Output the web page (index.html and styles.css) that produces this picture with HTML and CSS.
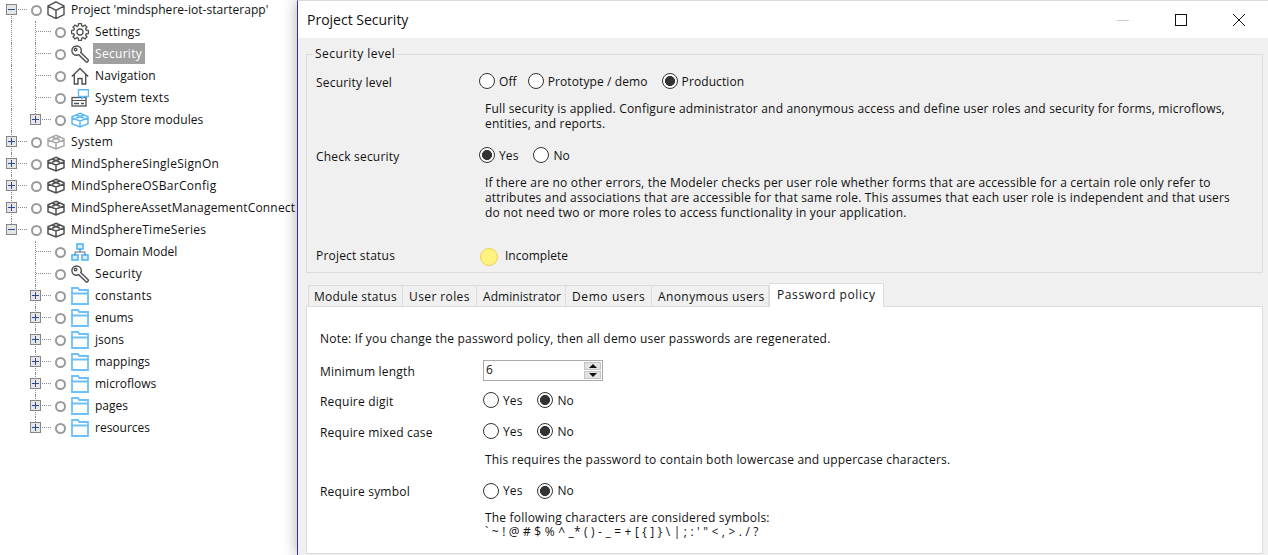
FILE: index.html
```html
<!DOCTYPE html>
<html lang="en">
<head>
<meta charset="utf-8">
<title>Project Security</title>
<link rel="stylesheet" href="styles.css">
</head>
<body>
<svg class="defs" aria-hidden="true">
  <symbol id="i-cube" viewBox="0 0 18 18"><path d="M9 .8 17 5v8.600l-8 4-8-4V5zM1 5l8 4.400L17 5M9 9.400v8.200" fill="none" stroke="#505050" stroke-width="1.400"/></symbol>
  <symbol id="i-gear" viewBox="0 0 18 18"><g transform="translate(9 9)" fill="none" stroke="#505050" stroke-width="1.300"><path d="M6.150-1.760 8.500-1.350V1.350L6.150 1.760 5.600 3.100 6.960 5.050 5.050 6.960 3.100 5.600 1.760 6.150 1.350 8.500H-1.350L-1.760 6.150-3.100 5.600-5.050 6.960-6.960 5.050-5.600 3.100-6.150 1.760-8.500 1.350V-1.350L-6.150-1.760-5.600-3.100-6.960-5.050-5.050-6.960-3.100-5.600-1.760-6.150-1.350-8.500H1.350L1.760-6.150 3.100-5.600 5.050-6.960 6.960-5.050 5.600-3.100z"/><circle r="3"/></g></symbol>
  <symbol id="i-key" viewBox="0 0 18 18"><g fill="none" stroke="#505050" stroke-width="1.400"><path d="M5.600 1C8.300 1 10.300 3 10.300 5.600c0 .8-.2 1.400-.5 2l7.600 7.300c.3.3.3.6 0 .9l-1.200 1.200c-.3.3-.6.3-.9 0L7.700 9.700c-.6.3-1.300.5-2.100.5C3 10.200.9 8.200.9 5.600.9 3 3 1 5.600 1z"/><circle cx="4.600" cy="4.600" r="1.300"/></g></symbol>
  <symbol id="i-home" viewBox="0 0 18 18"><path d="M.8 9.500 9 1.500l8.200 8M3.300 7.500V17H7v-5.500h4V17h3.700V7.500" fill="none" stroke="#505050" stroke-width="1.400"/></symbol>
  <symbol id="i-text" viewBox="0 0 18 18"><rect x="1" y="8.500" width="14" height="8.500" fill="none" stroke="#505050" stroke-width="1.300"/><path d="M1 11.500h14" stroke="#505050"/><path d="M3 14.500h5M10 14.500h3" stroke="#505050" stroke-width="1.500"/><path d="M7.500.7h10v6.800h-4.500l-2 2v-2H7.500z" fill="#fff" stroke="#5cb8f8" stroke-width="1.400"/></symbol>
  <symbol id="i-box" viewBox="0 0 18 16"><path d="M9 1.200 17 4.700v7L9 15l-8-3.300v-7zM1 6 9 9l8-3M9 9v6M5 3l8 3.300M13 3 5 6.300" fill="none" stroke="currentColor" stroke-width="1.500"/></symbol>
  <symbol id="i-domain" viewBox="0 0 18 18"><g fill="#d8eeff" stroke="#5cb8f8" stroke-width="1.700"><rect x="6" y="1" width="6" height="5"/><rect x="1" y="12" width="6" height="5"/><rect x="11" y="12" width="6" height="5"/></g><path d="M9 6v3M4 12V9h10v3" fill="none" stroke="#4a6a8a"/></symbol>
  <symbol id="i-folder" viewBox="0 0 18 18"><path d="M1 1h6l1.200 2H17v14H1zM1 6.500h16" fill="none" stroke="#6cc0fb" stroke-width="1.800"/></symbol>
</svg>

<div class="app">
  <nav class="tree">
    <div class="node root"><span class="guide down arm"><span class="exp minus"></span></span><span class="dot"></span><svg class="ico"><use href="#i-cube"/></svg><span class="lbl">Project 'mindsphere-iot-starterapp'</span></div>
    <div class="node"><span class="guide"></span><span class="guide arm"></span><span class="dot"></span><svg class="ico"><use href="#i-gear"/></svg><span class="lbl">Settings</span></div>
    <div class="node"><span class="guide"></span><span class="guide arm"></span><span class="dot"></span><svg class="ico"><use href="#i-key"/></svg><span class="lbl selected">Security</span></div>
    <div class="node"><span class="guide"></span><span class="guide arm"></span><span class="dot"></span><svg class="ico"><use href="#i-home"/></svg><span class="lbl">Navigation</span></div>
    <div class="node"><span class="guide"></span><span class="guide arm"></span><span class="dot"></span><svg class="ico"><use href="#i-text"/></svg><span class="lbl wider">System texts</span></div>
    <div class="node"><span class="guide"></span><span class="guide up arm"><span class="exp plus"></span></span><span class="dot"></span><svg class="ico box-blue"><use href="#i-box"/></svg><span class="lbl">App Store modules</span></div>
    <div class="node"><span class="guide arm"><span class="exp plus"></span></span><span class="dot"></span><svg class="ico box-light"><use href="#i-box"/></svg><span class="lbl wider">System</span></div>
    <div class="node"><span class="guide arm"><span class="exp plus"></span></span><span class="dot"></span><svg class="ico box-dark"><use href="#i-box"/></svg><span class="lbl wider">MindSphereSingleSignOn</span></div>
    <div class="node"><span class="guide arm"><span class="exp plus"></span></span><span class="dot"></span><svg class="ico box-dark"><use href="#i-box"/></svg><span class="lbl wider">MindSphereOSBarConfig</span></div>
    <div class="node"><span class="guide arm"><span class="exp plus"></span></span><span class="dot"></span><svg class="ico box-dark"><use href="#i-box"/></svg><span class="lbl fit">MindSphereAssetManagementConnect</span></div>
    <div class="node"><span class="guide up arm"><span class="exp minus"></span></span><span class="dot"></span><svg class="ico box-dark"><use href="#i-box"/></svg><span class="lbl wider">MindSphereTimeSeries</span></div>
    <div class="node"><span class="guide off"></span><span class="guide arm"></span><span class="dot"></span><svg class="ico"><use href="#i-domain"/></svg><span class="lbl tight">Domain Model</span></div>
    <div class="node"><span class="guide off"></span><span class="guide arm"></span><span class="dot"></span><svg class="ico"><use href="#i-key"/></svg><span class="lbl wider">Security</span></div>
    <div class="node"><span class="guide off"></span><span class="guide arm"><span class="exp plus"></span></span><span class="dot"></span><svg class="ico"><use href="#i-folder"/></svg><span class="lbl wider">constants</span></div>
    <div class="node"><span class="guide off"></span><span class="guide arm"><span class="exp plus"></span></span><span class="dot"></span><svg class="ico"><use href="#i-folder"/></svg><span class="lbl tight">enums</span></div>
    <div class="node"><span class="guide off"></span><span class="guide arm"><span class="exp plus"></span></span><span class="dot"></span><svg class="ico"><use href="#i-folder"/></svg><span class="lbl tight">jsons</span></div>
    <div class="node"><span class="guide off"></span><span class="guide arm"><span class="exp plus"></span></span><span class="dot"></span><svg class="ico"><use href="#i-folder"/></svg><span class="lbl tight">mappings</span></div>
    <div class="node"><span class="guide off"></span><span class="guide arm"><span class="exp plus"></span></span><span class="dot"></span><svg class="ico"><use href="#i-folder"/></svg><span class="lbl tight">microflows</span></div>
    <div class="node"><span class="guide off"></span><span class="guide arm"><span class="exp plus"></span></span><span class="dot"></span><svg class="ico"><use href="#i-folder"/></svg><span class="lbl tight">pages</span></div>
    <div class="node"><span class="guide off"></span><span class="guide up arm"><span class="exp plus"></span></span><span class="dot"></span><svg class="ico"><use href="#i-folder"/></svg><span class="lbl tight">resources</span></div>
  </nav>

  <main class="dialog">
    <header class="titlebar">
      <h1 class="title">Project Security</h1>
      <div class="winctl">
        <span class="wbtn"><svg width="14" height="14" viewBox="0 0 14 14"><path d="M1 7.500h12" stroke="#ccc"/></svg></span>
        <span class="wbtn"><svg width="14" height="14" viewBox="0 0 14 14"><rect x="1.500" y="1.500" width="11" height="11" fill="none" stroke="#111"/></svg></span>
        <span class="wbtn"><svg width="14" height="14" viewBox="0 0 14 14"><path d="M1 1l12 12M13 1 1 13" stroke="#111" fill="none"/></svg></span>
      </div>
    </header>
    <div class="dialog-body">
      <fieldset class="group">
        <legend class="legend">Security level</legend>
        <div class="field">
          <span class="field-label">Security level</span>
          <div class="radios">
            <span class="opt off-opt"><i class="radio"></i>Off</span>
            <span class="opt proto-opt"><i class="radio"></i>Prototype / demo</span>
            <span class="opt"><i class="radio on"></i>Production</span>
          </div>
        </div>
        <p class="hint hint-a">Full security is applied. Configure administrator and anonymous access and define user roles and security for forms, microflows,<br>entities, and reports.</p>
        <div class="field field-check">
          <span class="field-label">Check security</span>
          <div class="radios">
            <span class="opt yes-opt"><i class="radio on"></i>Yes</span>
            <span class="opt"><i class="radio"></i>No</span>
          </div>
        </div>
        <p class="hint hint-a">If there are no other errors, the Modeler checks per user role whether forms that are accessible for a certain role only refer to<br>attributes and associations that are accessible for that same role. This assumes that each user role is independent and that users<br>do not need two or more roles to access functionality in your application.</p>
        <div class="field field-status">
          <span class="field-label plain">Project status</span>
          <div class="status"><i class="lamp"></i>Incomplete</div>
        </div>
      </fieldset>

      <div class="tabs">
        <span class="tab t1">Module status</span>
        <span class="tab t2">User roles</span>
        <span class="tab t3">Administrator</span>
        <span class="tab t4">Demo users</span>
        <span class="tab t5">Anonymous users</span>
        <span class="tab active">Password policy</span>
      </div>
      <section class="panel">
        <p class="note">Note: If you change the password policy, then all demo user passwords are regenerated.</p>
        <div class="field p-min">
          <span class="field-label">Minimum length</span>
          <div class="spin"><span class="spin-val">6</span><span class="spin-btns"><b class="spin-btn"><i class="tri up-tri"></i></b><b class="spin-btn"><i class="tri down-tri"></i></b></span></div>
        </div>
        <div class="field p-digit">
          <span class="field-label">Require digit</span>
          <div class="radios"><span class="opt yes-opt"><i class="radio"></i>Yes</span><span class="opt"><i class="radio on"></i>No</span></div>
        </div>
        <div class="field p-mixed">
          <span class="field-label">Require mixed case</span>
          <div class="radios"><span class="opt yes-opt"><i class="radio"></i>Yes</span><span class="opt"><i class="radio on"></i>No</span></div>
        </div>
        <p class="hint hint-p hint-mixed">This requires the password to contain both lowercase and uppercase characters.</p>
        <div class="field p-symbol">
          <span class="field-label">Require symbol</span>
          <div class="radios"><span class="opt yes-opt"><i class="radio"></i>Yes</span><span class="opt"><i class="radio on"></i>No</span></div>
        </div>
        <p class="hint hint-p hint-symbol">The following characters are considered symbols:<br>` ~ ! @ # $ % ^ _* ( ) - _ = + [ { ] } \ | ; : ' " &lt; , &gt; . / ?</p>
      </section>
    </div>
  </main>
</div>
</body>
</html>
```

FILE: styles.css
```css
* { box-sizing: border-box; }
html, body { margin: 0; height: 100%; overflow: hidden; background: #fff; }
body { font: 12px/15px "Open Sans", "Noto Sans", sans-serif; color: #111; }
.defs { display: none; }
.app { display: flex; height: 555px; }

/* project tree */
.tree { width: 297px; flex: none; margin-top: -1px; overflow: hidden; }
.node { display: flex; align-items: center; height: 22px; white-space: nowrap; }
.guide { position: relative; flex: none; width: 24px; height: 22px; }
.guide::before { content: ""; position: absolute; left: 11px; top: 0; bottom: 0; border-left: 1px dotted #8a8a8a; }
.guide.up::before { bottom: 11px; }
.guide.down::before { top: 11px; }
.guide.off::before { display: none; }
.guide.arm::after { content: ""; position: absolute; left: 12px; top: 10px; width: 15px; border-top: 1px dotted #8a8a8a; }
.exp { position: absolute; z-index: 1; left: 6px; top: 5px; width: 11px; height: 11px; border: 1px solid #858585; background-color: #e6e6e6; background-repeat: no-repeat; }
.exp.minus { background-image: linear-gradient(#2b4a94, #2b4a94); background-position: center; background-size: 7px 1px; }
.exp.plus { background-image: linear-gradient(#2b4a94, #2b4a94), linear-gradient(#2b4a94, #2b4a94); background-position: center, center; background-size: 7px 1px, 1px 7px; }
.dot { flex: none; width: 11px; height: 11px; margin-left: 7px; border: 2px solid #9a9a9a; border-radius: 50%; background: #fff; }
.ico { flex: none; width: 18px; height: 18px; margin-left: 5px; }
.box-blue { color: #5cb8f8; }
.box-light { color: #a8a8a8; }
.box-dark { color: #505050; }
.lbl { height: 21px; margin: 0 0 2px 4px; padding: 0 2px; line-height: 21px; letter-spacing: .1px; }
.lbl.wider { letter-spacing: .3px; }
.lbl.tight { letter-spacing: 0; }
.lbl.fit { padding-right: 0; letter-spacing: .17px; }
.root .lbl { letter-spacing: .03px; }
.lbl.selected { padding-right: 3px; background: #a0a0a0; color: #fff; letter-spacing: .3px; }

/* dialog */
.dialog { flex: 1; min-width: 0; height: 555px; position: relative; display: flex; flex-direction: column; background: #f0f0f0; border-left: 1px solid #3a2f9c; border-top: 1px solid #dadada; box-shadow: 0 0 14px rgba(0, 0, 0, .32); }
.titlebar { flex: none; display: flex; justify-content: space-between; align-items: center; height: 37px; padding-left: 9px; background: #fff; }
.title { margin: 0; font-size: 14px; font-weight: 400; }
.winctl { display: flex; }
.wbtn { display: flex; align-items: center; justify-content: center; width: 58px; height: 37px; }
.dialog-body { flex: 1; padding: 8px 5px 0 8px; min-height: 0; }

.group { margin: 0; min-width: 0; height: 227px; padding: 9px 9px 0; border: 1px solid #dcdcdc; }
.legend { margin-left: -3px; padding: 0 2px; line-height: 16px; letter-spacing: .5px; }
.field { display: flex; align-items: center; height: 20px; }
.field-label { flex: none; width: 163px; padding-top: 2px; letter-spacing: .2px; }
.field-label.plain { padding-top: 0; }
.radios { display: flex; align-items: center; letter-spacing: .1px; }
.opt { display: flex; align-items: center; margin-right: 7px; }
.off-opt { margin-right: 11px; }
.proto-opt { margin-right: 14px; }
.yes-opt { margin-right: 15px; }
.radio { flex: none; width: 16px; height: 16px; margin-right: 4px; border: 1px solid #333; border-radius: 50%; background: #fff; }
.radio.on { background: radial-gradient(circle, #333 0 4.700px, #fff 5.300px); }
.hint { margin: 0; letter-spacing: .19px; }
.hint-a { margin-top: 11px; margin-left: 169px; line-height: 14.700px; }
.field-check { margin-top: 14px; }
.field-status { margin-top: 25px; }
.status { display: flex; align-items: center; margin-left: 1px; }
.lamp { width: 18px; height: 18px; margin: 2px 7px 0 0; border: 1px solid #ecd24f; border-radius: 50%; background: #fff27f; }

.tabs { display: flex; align-items: flex-end; height: 23px; margin-top: 10px; padding-left: 2px; position: relative; z-index: 1; letter-spacing: .4px; }
.tab { height: 21px; padding: 0 6px; line-height: 22px; background: #f0f0f0; border: 1px solid #dcdcdc; border-left-width: 0; border-bottom: 0; white-space: nowrap; }
.tab.t1 { width: 95px; padding-left: 5px; border-left-width: 1px; letter-spacing: .25px; }
.tab.t2 { width: 74px; }
.tab.t3 { width: 89px; letter-spacing: .05px; }
.tab.t4 { width: 86px; letter-spacing: .6px; }
.tab.t5 { width: 117px; }
.tab.active { width: 115px; height: 24px; margin-bottom: -1px; padding-left: 7px; line-height: 21px; background: #fff; border-left-width: 1px; letter-spacing: .6px; }
.panel { height: 248px; padding: 0 13px; background: #fff; border: 1px solid #dcdcdc; }
.note { margin: 24px 0 0; letter-spacing: .2px; }
.p-min { margin-top: 14px; height: 21px; }
.p-digit { margin-top: 9px; }
.p-mixed { margin-top: 11px; }
.p-symbol { margin-top: 13px; }
.hint-p { margin-left: 165px; line-height: 14.700px; }
.hint-mixed { margin-top: 12px; }
.hint-symbol { margin-top: 10px; }

.spin { display: flex; justify-content: space-between; width: 120px; height: 21px; padding: 1px; border: 1px solid #aaa; background: #fff; }
.spin-val { padding-left: 1px; line-height: 15px; }
.spin-btns { display: flex; flex-direction: column; width: 17px; gap: 1px; }
.spin-btn { display: flex; align-items: center; justify-content: center; flex: 1; background: #e3e3e3; border: 1px solid #c4c4c4; }
.tri { width: 0; height: 0; border-left: 4px solid transparent; border-right: 4px solid transparent; }
.up-tri { border-bottom: 4px solid #111; }
.down-tri { border-top: 4px solid #111; }
```
